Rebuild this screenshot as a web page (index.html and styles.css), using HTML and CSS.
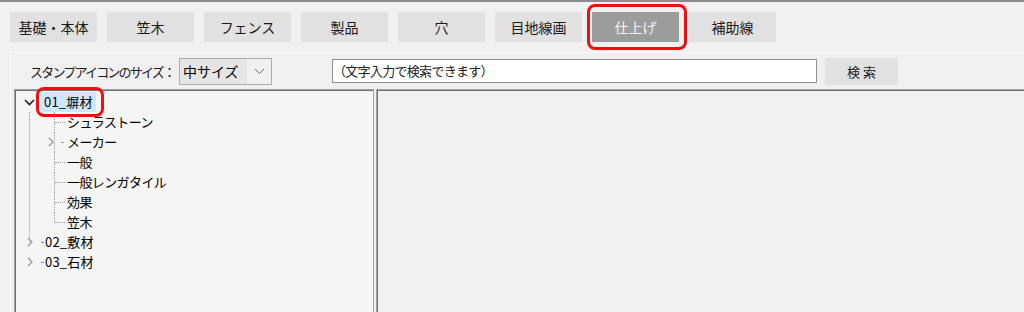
FILE: index.html
```html
<!DOCTYPE html>
<html lang="ja">
<head>
	<meta charset="UTF-8">
	<title>スタンプ</title>
	<link rel="stylesheet" href="styles.css">
</head>
<body>
<div class="tabs">
	<div class="tab">基礎・本体</div>
	<div class="tab">笠木</div>
	<div class="tab">フェンス</div>
	<div class="tab">製品</div>
	<div class="tab">穴</div>
	<div class="tab">目地線画</div>
	<div class="tab on">仕上げ<span class="mark"></span></div>
	<div class="tab">補助線</div>
</div>
<div class="group">
	<div class="tools">
		<span class="label">スタンプアイコンのサイズ：</span>
		<div class="combo">
			<span class="combo-text">中サイズ</span>
			<span class="combo-arrow"><svg width="11" height="7" viewBox="0 0 11 7"><path d="M1 1l4.5 4.5L10 1" fill="none" stroke="#6d6d6d" stroke-width="1"/></svg></span>
		</div>
		<div class="search">（文字入力で検索できます）</div>
		<div class="btn">検 索</div>
	</div>
	<div class="panes">
		<div class="tree">
			<div class="node open">
				<span class="tw"><svg width="11" height="7" viewBox="0 0 11 7"><path d="M1 1l4.5 4.5L10 1" fill="none" stroke="#222" stroke-width="1.6"/></svg></span>
				<span class="name sel">01_塀材<span class="mark"></span></span>
			</div>
			<div class="kids">
				<div class="leaf">シュラストーン</div>
				<div class="leaf more"><span class="tw2"><svg width="6" height="10" viewBox="0 0 6 10"><path d="M1 1l4 4-4 4" fill="none" stroke="#9a9a9a" stroke-width="1.4"/></svg></span>メーカー</div>
				<div class="leaf">一般</div>
				<div class="leaf">一般レンガタイル</div>
				<div class="leaf">効果</div>
				<div class="leaf last">笠木</div>
			</div>
			<div class="node shut">
				<span class="tw"><svg width="6" height="10" viewBox="0 0 6 10"><path d="M1 1l4 4-4 4" fill="none" stroke="#9a9a9a" stroke-width="1.4"/></svg></span>
				<span class="name">02_敷材</span>
			</div>
			<div class="node shut">
				<span class="tw"><svg width="6" height="10" viewBox="0 0 6 10"><path d="M1 1l4 4-4 4" fill="none" stroke="#9a9a9a" stroke-width="1.4"/></svg></span>
				<span class="name">03_石材</span>
			</div>
		</div>
		<div class="view"></div>
	</div>
</div>
</body>
</html>
```

FILE: styles.css
```css
html,body{
	margin: 0;
	background: #f0f0f0;
	font-family: "Noto Sans CJK JP", "Noto Sans", sans-serif;
	color: #000;
	overflow: hidden;
}
body{
	height: 312px;
	border-top: 2px solid #8c8c8c;
	box-sizing: border-box;
}
/* 上のタブ */
.tabs{
	display: flex;
	gap: 10px;
	padding: 10px 0 0 10px;
	height: 40px;
	box-sizing: border-box;
}
.tab{
	width: 87px;
	height: 30px;
	background: #e1e1e1;
	font-size: 14px;
	line-height: 30px;
	text-align: center;
	color: #1a1a1a;
	position: relative;
}
.tab.on{
	background: #9c9c9c;
	color: #f4f4f4;
}
.mark{
	position: absolute;
	border: 3px solid #f01010;
	border-radius: 8px;
}
.tab .mark{
	left: -5px;
	right: -8px;
	top: -8px;
	bottom: -8px;
}
/* 下の枠 */
.group{
	margin: 10px 0 0 10px;
	border-top: 1px solid #fbfbfb;
	border-left: 1px solid #fbfbfb;
	height: 259px;
}
.tools{
	display: flex;
	align-items: center;
	height: 36px;
}
.label{
	font-size: 13px;
	letter-spacing: -1.8px;
	white-space: nowrap;
	margin-left: 19px;
	width: 149px;
	color: #1a1a1a;
}
.combo{
	display: flex;
	width: 91px;
	height: 25px;
	border: 1px solid #adadad;
}
.combo-text{
	flex: 1;
	background: #e5e5e5;
	font-size: 14px;
	line-height: 25px;
	padding-left: 3px;
}
.combo-arrow{
	width: 24px;
	background: #f0f0f0;
	display: flex;
	align-items: center;
	justify-content: center;
}
.search{
	margin-left: 60px;
	width: 483px;
	height: 22px;
	border: 1px solid #8f8f8f;
	background: #fff;
	font-size: 13px;
	letter-spacing: -0.7px;
	line-height: 22px;
	color: #222;
	white-space: nowrap;
}
.btn{
	margin-left: 8px;
	width: 73px;
	height: 27px;
	background: #e1e1e1;
	font-size: 13px;
	line-height: 27px;
	text-align: center;
	color: #1a1a1a;
}
.panes{
	display: flex;
	gap: 2px;
	margin-left: 3px;
	height: 223px;
}
.tree, .view{
	border: 1px solid #a3a3a3;
	box-shadow: inset 1px 1px 0 #6f6f6f;
	border-bottom: none;
}
.tree{
	width: 358px;
	background: #f5f5f5;
	padding-top: 2px;
	font-size: 13px;
}
.view{
	flex: 1;
	background: #f0f0f0;
	border-right: none;
}
/* ツリー */
.node{
	height: 20px;
	display: flex;
	align-items: center;
	position: relative;
}
.tw{
	width: 24px;
	display: flex;
	justify-content: center;
	margin-left: 2px;
}
.name{
	position: relative;
	padding: 0 3px;
	line-height: 20px;
	letter-spacing: 0.2px;
}
.name.sel{
	background: #cce8ff;
}
.name .mark{
	left: -5px;
	right: -8px;
	top: -5px;
	bottom: -5px;
}
.shut .tw{
	margin-left: 4px;
	width: 22px;
}
.shut .name{
	padding-left: 4px;
}
.shut::before{
	content: "";
	position: absolute;
	left: 26px;
	top: 10px;
	width: 2px;
	border-top: 1px dotted #8a8a8a;
}
.kids{
	position: relative;
}
.kids::before{
	content: "";
	position: absolute;
	left: 14px;
	top: 0;
	bottom: -10px;
	border-left: 1px dotted #a0a0a0;
}
.leaf{
	position: relative;
	height: 20px;
	line-height: 20px;
	padding-left: 52px;
	letter-spacing: -0.6px;
}
.leaf::before{
	content: "";
	position: absolute;
	left: 39px;
	top: 0;
	height: 20px;
	border-left: 1px dotted #a0a0a0;
}
.leaf.last::before{
	height: 10px;
}
.leaf::after{
	content: "";
	position: absolute;
	left: 40px;
	top: 10px;
	width: 10px;
	border-top: 1px dotted #a0a0a0;
}
.leaf.more::after{
	left: 46px;
	width: 2px;
}
.tw2{
	position: absolute;
	left: 33px;
	top: 5px;
	line-height: 0;
	background: #f5f5f5;
	z-index: 1;
}
```
